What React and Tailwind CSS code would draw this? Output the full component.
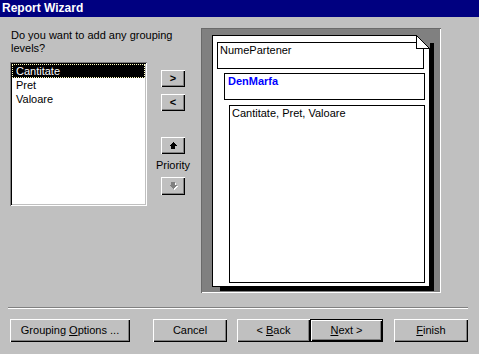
const raised =
  'bg-[#c0c0c0] shadow-[inset_1px_1px_0_#fff,inset_-1px_-1px_0_#000,inset_-2px_-2px_0_#808080]';
const sunken =
  'shadow-[inset_1px_1px_0_#808080,inset_-1px_-1px_0_#fff,inset_2px_2px_0_#000,inset_-2px_-2px_0_#c0c0c0]';

function Btn({ className = '', children }) {
  return (
    <div className={`${raised} flex items-center justify-center text-black ${className}`}>
      {children}
    </div>
  );
}

function UpArrow() {
  return (
    <svg width="8" height="7" viewBox="0 0 8 7" shapeRendering="crispEdges">
      <polygon points="4,0 8,4 6,4 6,7 2,7 2,4 0,4" fill="#000" />
    </svg>
  );
}

function DownArrow() {
  return (
    <svg width="9" height="8" viewBox="0 0 9 8" shapeRendering="crispEdges">
      <polygon points="3,1 7,1 7,4 9,4 5,8 1,4 3,4" fill="#fff" />
      <polygon points="2,0 6,0 6,3 8,3 4,7 0,3 2,3" fill="#808080" />
    </svg>
  );
}

export default function App() {
  const fields = ['Cantitate', 'Pret', 'Valoare'];

  return (
    <div className="w-[479px] h-[354px] bg-[#c0c0c0] overflow-hidden text-[11px] leading-[13px] text-black font-['Liberation_Sans',Arial,sans-serif]">
      <div className="h-[17px] bg-[#000080] text-white font-bold text-[12px] leading-[17px] pl-[2px]">
        Report Wizard
      </div>

      <div className="flex mt-[11px]">
        <div className="w-[201px]">
          <div className="pt-[1px] pl-[11px] w-[190px]">
            Do you want to add any grouping
            <br />
            levels?
          </div>
          <div className="flex mt-[7px]">
            <div className={`ml-[10px] w-[137px] h-[144px] bg-white p-[2px] ${sunken}`}>
              {fields.map((f, i) => (
                <div
                  key={f}
                  className={`h-[14px] leading-[14px] pl-[4px] ${
                    i === 0 ? 'bg-black text-white outline-1 outline-dotted outline-[#ffffc0] -outline-offset-1' : ''
                  }`}
                >
                  {f}
                </div>
              ))}
            </div>
            <div className="ml-[14px] w-[24px] flex flex-col items-center">
              <Btn className="mt-[8px] w-[24px] h-[17px] font-bold text-[11px]">&gt;</Btn>
              <Btn className="mt-[7px] w-[24px] h-[17px] font-bold text-[11px]">&lt;</Btn>
              <Btn className="mt-[26px] w-[24px] h-[17px]">
                <UpArrow />
              </Btn>
              <div className="mt-[5px] h-[13px] text-center whitespace-nowrap">Priority</div>
              <Btn className="mt-[5px] w-[24px] h-[18px]">
                <DownArrow />
              </Btn>
            </div>
          </div>
        </div>

        <div className="w-[240px] h-[265px] bg-[#808080] shadow-[inset_1px_1px_0_#6a6a6a,inset_-1px_-1px_0_#fff] pl-[11px] pt-[7px]">
          <div className="relative w-[218px] h-[252px] bg-white border border-black shadow-[6px_6px_0_-2px_#000] px-[4px] pt-[6px]">
            <svg
              className="absolute -top-px -right-px"
              width="14"
              height="14"
              viewBox="0 0 14 14"
              shapeRendering="crispEdges"
            >
              <polygon points="0,0 14,0 14,14" fill="#808080" />
              <polygon points="0.5,0.5 13.5,13.5 0.5,13.5" fill="#fff" stroke="#000" strokeWidth="1" />
              <line x1="0.5" y1="0.5" x2="13.5" y2="13.5" stroke="#000" strokeWidth="1" />
            </svg>
            <div className="w-[207px] h-[27px] border border-black pl-[2px] pt-[1px]">NumePartener</div>
            <div className="ml-[7px] mt-[4px] w-[201px] h-[27px] border border-black pl-[3px] pt-[1px] font-bold text-[#0000ff]">
              DenMarfa
            </div>
            <div className="ml-[12px] mt-[5px] w-[196px] h-[178px] border border-black pl-[2px] pt-[1px]">
              Cantitate, Pret, Valoare
            </div>
          </div>
        </div>
      </div>

      <div className="mt-[14px] ml-[8px] w-[460px] h-[2px] border-t border-[#808080] border-b border-b-white" />

      <div className="flex mt-[10px] ml-[10px]">
        <Btn className="w-[120px] h-[23px]">
          Grouping <span className="underline ml-[3px]">O</span>ptions ...
        </Btn>
        <Btn className="ml-[23px] w-[74px] h-[23px]">Cancel</Btn>
        <Btn className="ml-[10px] w-[73px] h-[23px]">
          &lt; <span className="underline ml-[3px]">B</span>ack
        </Btn>
        <div className="w-[73px] h-[23px] border border-black">
          <Btn className="w-full h-full">
            <span className="underline">N</span>ext &gt;
          </Btn>
        </div>
        <Btn className="ml-[11px] w-[74px] h-[23px]">
          <span className="underline">F</span>inish
        </Btn>
      </div>
    </div>
  );
}
